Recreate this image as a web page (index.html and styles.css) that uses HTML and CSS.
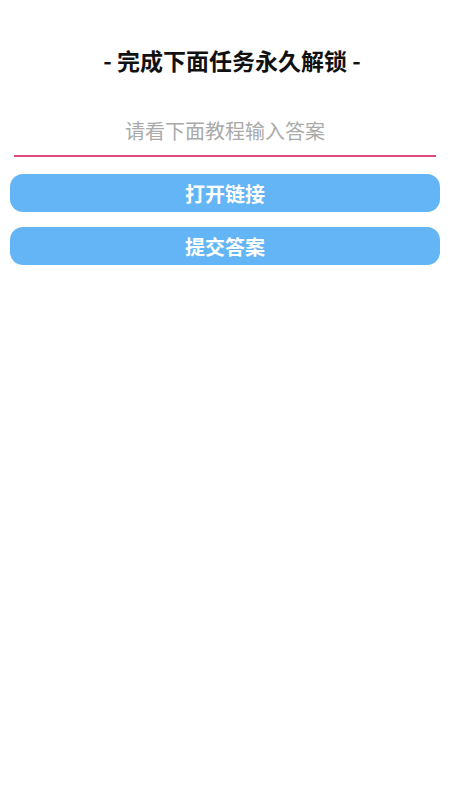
FILE: index.html
```html
<!DOCTYPE html>
<html lang="zh-CN">
<head>
<meta charset="utf-8">
<meta name="viewport" content="width=450">
<link rel="stylesheet" href="styles.css">
<title>解锁</title>
</head>
<body>
<div class="page">
  <h1 class="title">- 完成下面任务永久解锁 -</h1>
  <div class="field">
    <input class="answer" type="text" placeholder="请看下面教程输入答案">
  </div>
  <div class="actions">
    <button class="btn" type="button">打开链接</button>
    <button class="btn" type="button">提交答案</button>
  </div>
</div>
</body>
</html>
```
FILE: styles.css
```css
html, body {
  margin: 0;
  padding: 0;
  background: #ffffff;
}
body {
  font-family: "Noto Sans CJK SC", "Noto Sans", sans-serif;
}
.page {
  display: flex;
  flex-direction: column;
}
.title {
  margin: 0;
  padding: 45px 0 0 14px;
  font-size: 23px;
  line-height: 30px;
  font-weight: 700;
  color: #111111;
  text-align: center;
}
.field {
  margin: 30px 14px 0;
}
.answer {
  display: block;
  box-sizing: content-box;
  width: 100%;
  height: 50px;
  padding: 0;
  margin: 0;
  border: none;
  border-bottom: 2px solid #dc4a7e;
  outline: none;
  background: transparent;
  font-family: "Noto Sans CJK SC", "Noto Sans", sans-serif;
  font-size: 20px;
  color: #333333;
  text-align: center;
}
.answer::placeholder {
  color: #aaaaaa;
}
.actions {
  display: flex;
  flex-direction: column;
  gap: 15px;
  margin: 17px 10px 0;
}
.btn {
  height: 38px;
  border: none;
  border-radius: 13px;
  background: #64b5f6;
  color: #ffffff;
  font-family: "Noto Sans CJK SC", "Noto Sans", sans-serif;
  font-size: 20px;
  font-weight: 700;
  padding: 0;
  cursor: pointer;
}
```
